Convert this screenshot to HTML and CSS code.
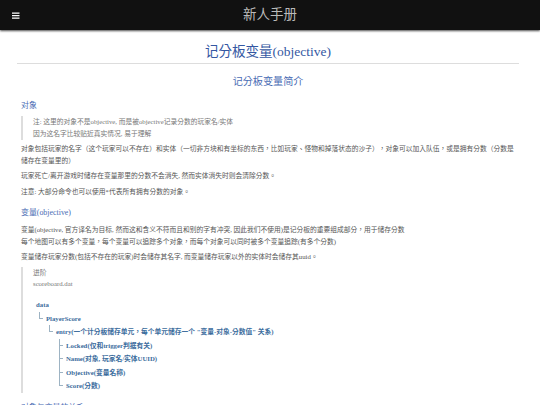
FILE: index.html
```html
<!DOCTYPE html>
<html lang="zh-TW">
<head>
<meta charset="utf-8">
<title>新人手册</title>
<link rel="stylesheet" href="styles.css">
</head>
<body>
<header class="topbar">
  <svg class="menu" viewBox="0 0 8 8"><path d="M0 1.2h7.5M0 3.7h7.5M0 6.2h7.5" stroke="#fff" stroke-width="1.2"/></svg>
  <div class="brand">新人手册</div>
</header>
<main class="page">
  <h1>记分板变量(objective)</h1>
  <div class="content">
    <h2>记分板变量简介</h2>
    <h3>对象</h3>
    <blockquote>注: 这里的对象不是objective, 而是被objective记录分数的玩家名/实体<br>因为这名字比较贴近真实情况, 易于理解</blockquote>
    <p>对象包括玩家的名字（这个玩家可以不存在）和实体（一切非方块和有坐标的东西，比如玩家、怪物和掉落状态的沙子），对象可以加入队伍，或是拥有分数（分数是<br>储存在变量里的）</p>
    <p>玩家死亡/离开游戏时储存在变量那里的分数不会消失, 然而实体消失时则会清除分数。</p>
    <p>注意: 大部分命令也可以使用*代表所有拥有分数的对象。</p>
    <h3 class="next">变量(objective)</h3>
    <p>变量(objective, 官方译名为目标, 然而这和含义不符而且和别的字有冲突, 因此我们不使用)是记分板的重要组成部分，用于储存分数<br>每个地图可以有多个变量，每个变量可以追踪多个对象，而每个对象可以同时被多个变量追踪(有多个分数)</p>
    <p>变量储存玩家分数(包括不存在的玩家)时会储存其名字, 而变量储存玩家以外的实体时会储存其uuid。</p>
    <blockquote class="advanced">进阶<br>scoreboard.dat
      <ul class="tree">
        <li><span>data</span>
          <ul><li><span>PlayerScore</span>
            <ul><li><span>entry(一个计分板储存单元，每个单元储存一个 "变量-对象-分数值" 关系)</span>
              <ul>
                <li><span>Locked(仅和trigger判据有关)</span></li>
                <li><span>Name(对象, 玩家名/实体UUID)</span></li>
                <li><span>Objective(变量名称)</span></li>
                <li><span>Score(分数)</span></li>
              </ul>
            </li></ul>
          </li></ul>
        </li>
      </ul>
    </blockquote>
    <h3 class="last">对象与变量的关系</h3>
  </div>
</main>
</body>
</html>
```
FILE: styles.css
```css
* { box-sizing: border-box; }
body {
  margin: 0;
  height: 405px;
  overflow: hidden;
  background: #fff;
  color: #555;
  font: 6.75px/11.8px "Liberation Serif", "Noto Sans CJK TC", serif;
  text-spacing-trim: space-all;
  white-space: nowrap;
}
.topbar {
  display: grid;
  grid-template-columns: 12px 1fr 12px;
  align-items: center;
  height: 30px;
  padding: 0 12px;
  background: #111;
  box-shadow: 0 1px 2px rgba(0, 0, 0, .7);
}
.menu { width: 8px; height: 8px; margin-top: 1px; }
.brand { text-align: center; font-size: 13.5px; line-height: 30px; color: #bbb; }
.page { padding: 9px 21px 0 17px; }
h1, h2, h3, p, blockquote, ul { margin: 0; padding: 0; }
h1, h2, h3 { font-weight: 400; color: #4a6cb4; }
h1 {
  height: 25px;
  border-bottom: 1px solid #ddd;
  text-align: center;
  font-size: 13.5px;
  line-height: 26px;
  color: #3457a2;
}
.content { padding: 11px 0 0 4px; }
h2 { margin-right: 4px; text-align: center; font-size: 10.1px; line-height: 14px; }
h2 + h3 { margin-top: 11px; }
h3 { font-size: 7.9px; line-height: 12px; }
blockquote {
  margin: 4px 0 3.6px;
  padding-left: 10px;
  border-left: 2px solid #ddd;
  color: #777;
}
p { margin-bottom: 3.7px; }
.next { margin: 9.6px 0 4.4px; }
.advanced { margin-top: 2px; }
.tree { margin-top: 8.4px; padding-left: 3px; color: #3b6c9d; font-weight: 700; }
.tree, .tree ul { list-style: none; }
.tree ul { padding-left: 3px; }
.tree span { display: block; line-height: 13.5px; }
.tree ul li { position: relative; padding-left: 7px; }
.tree ul li::before, .tree ul li::after { content: ""; position: absolute; left: 0; }
.tree ul li::before { top: 0; bottom: 0; border-left: 1px solid #9db3c3; }
.tree ul li:last-child::before { bottom: auto; height: 7px; }
.tree ul li::after { top: 6px; width: 4px; border-top: 1px solid #9db3c3; }
.last { margin-top: 9px; }
```
